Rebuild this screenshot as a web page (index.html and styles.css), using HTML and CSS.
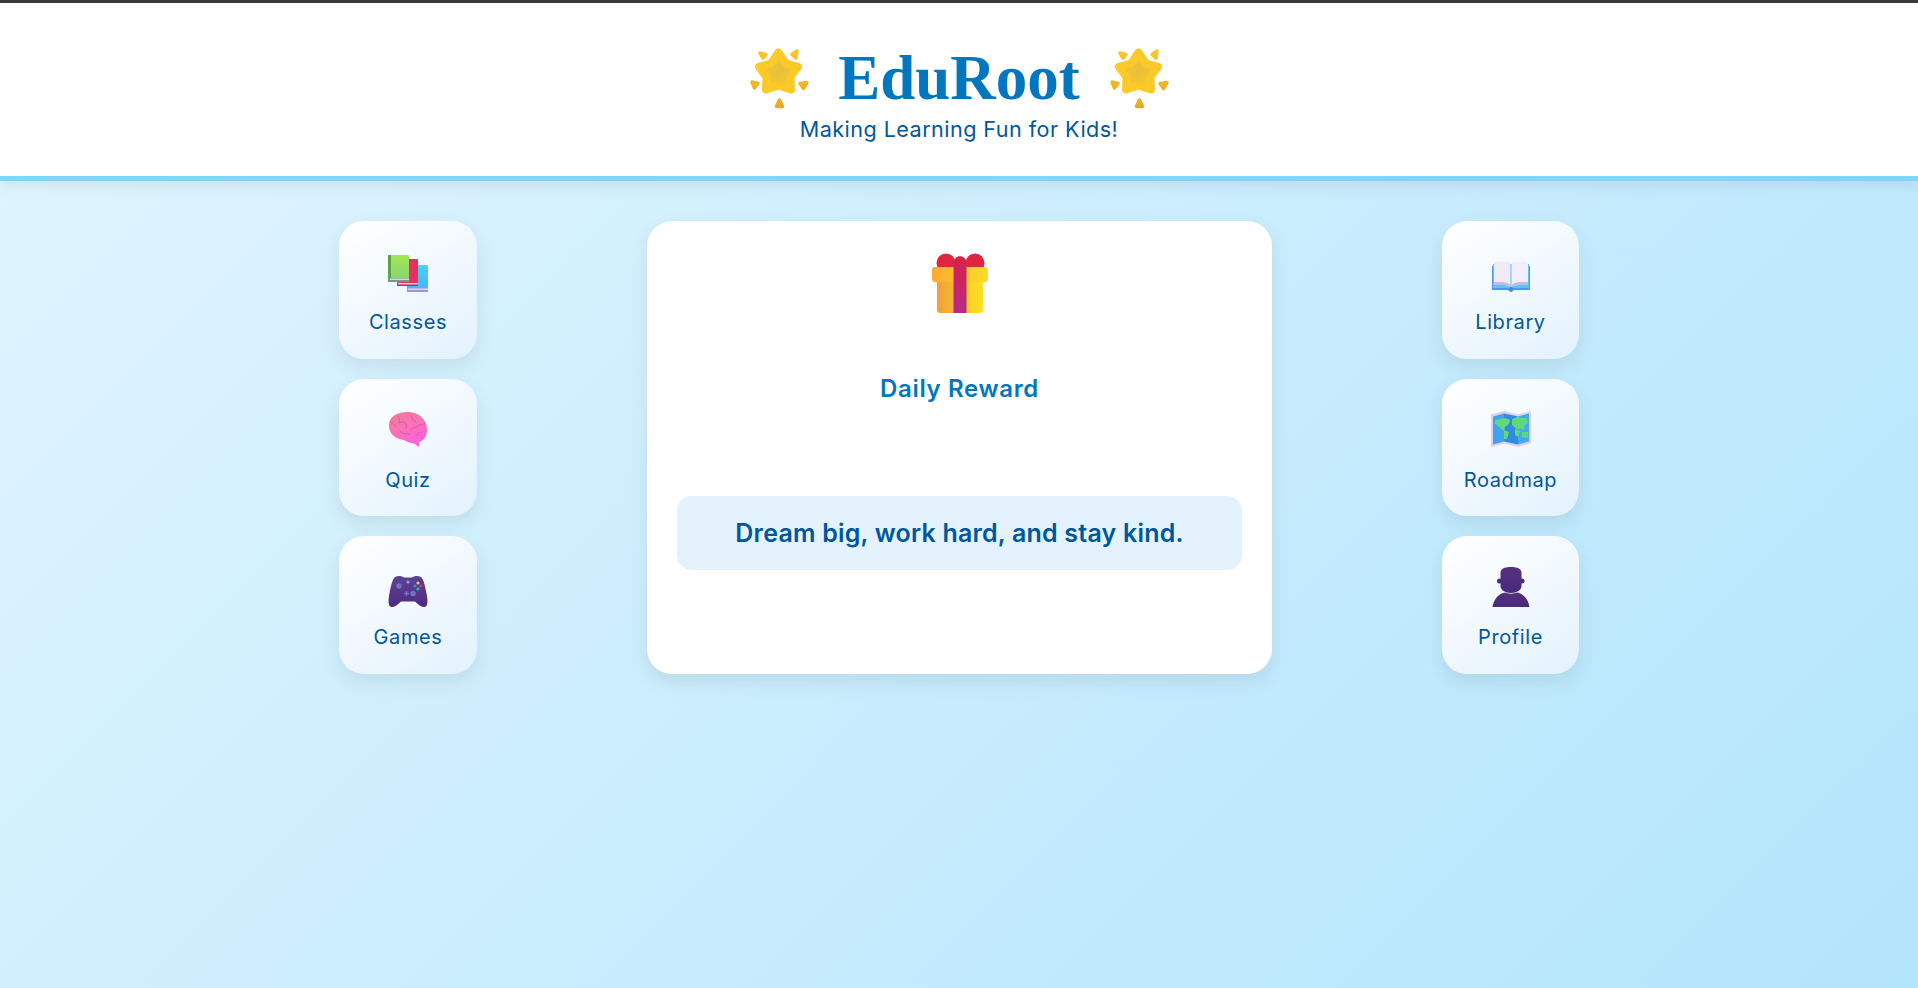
FILE: index.html
```html
<!DOCTYPE html>
<html>
<head>
    <title>EduRoot</title>
    <link rel="stylesheet" href="styles.css">
</head>
<body>
    <svg class="svg-defs" width="0" height="0">
        <defs>
            <radialGradient id="star-fill" cx="0.5" cy="0.5" r="0.6">
                <stop offset="0" stop-color="#e6bf3e"/>
                <stop offset="1" stop-color="#fdcb22"/>
            </radialGradient>
            <linearGradient id="spark-fill" x1="0" y1="0" x2="0" y2="1">
                <stop offset="0" stop-color="#f6c827"/>
                <stop offset="1" stop-color="#e8a92a"/>
            </linearGradient>
            <linearGradient id="brain-fill" x1="0" y1="0" x2="0.6" y2="1">
                <stop offset="0" stop-color="#ee7f92"/>
                <stop offset="0.5" stop-color="#f972b8"/>
                <stop offset="1" stop-color="#ff5fe0"/>
            </linearGradient>
            <linearGradient id="pad-fill" x1="0" y1="0" x2="0" y2="1">
                <stop offset="0" stop-color="#5b4396"/>
                <stop offset="1" stop-color="#4f2a80"/>
            </linearGradient>
            <linearGradient id="person-fill" x1="0" y1="0" x2="0" y2="1">
                <stop offset="0" stop-color="#54317f"/>
                <stop offset="1" stop-color="#49297a"/>
            </linearGradient>
            <linearGradient id="box-fill" x1="0" y1="0" x2="1" y2="0">
                <stop offset="0" stop-color="#f0a03c"/>
                <stop offset="1" stop-color="#ffe31f"/>
            </linearGradient>
            <linearGradient id="lid-fill" x1="0" y1="0" x2="1" y2="0">
                <stop offset="0" stop-color="#f9ab2f"/>
                <stop offset="1" stop-color="#ffdc2a"/>
            </linearGradient>
            <linearGradient id="ribbon-fill" x1="0" y1="0" x2="0" y2="1">
                <stop offset="0" stop-color="#dc2045"/>
                <stop offset="1" stop-color="#b62a8c"/>
            </linearGradient>
            <linearGradient id="green-book" x1="0" y1="0" x2="0" y2="1">
                <stop offset="0" stop-color="#a3e552"/>
                <stop offset="1" stop-color="#86d476"/>
            </linearGradient>
            <linearGradient id="blue-book" x1="0" y1="0" x2="0" y2="1">
                <stop offset="0" stop-color="#4dd0f5"/>
                <stop offset="1" stop-color="#45b3f5"/>
            </linearGradient>
        </defs>
    </svg>

    <header class="site-header">
        <div class="brand">
            <svg class="star" viewBox="6 6 64 64" width="64" height="64">
                <polygon points="37.5,12.5 45,23.5 57,26.8 49.5,36.9 50,49.5 37.5,45.5 25,49.5 25.500,36.9 18,26.8 30,23.5" fill="url(#star-fill)" stroke="#fbc928" stroke-width="8" stroke-linejoin="round"/>
                <path d="M19 13L25 14.500L22 18ZM51 14.500L56 11L55 18ZM11 42L17 43.500L13.500 48ZM59 43.500L66 42.500L62.500 48.500ZM38.500 60L41.500 66.500L35.500 66.500Z" fill="url(#spark-fill)" stroke="url(#spark-fill)" stroke-width="3.500" stroke-linejoin="round"/>
            </svg>
            <h1>EduRoot</h1>
            <svg class="star" viewBox="6 6 64 64" width="64" height="64">
                <polygon points="37.5,12.5 45,23.5 57,26.8 49.5,36.9 50,49.5 37.5,45.5 25,49.5 25.500,36.9 18,26.8 30,23.5" fill="url(#star-fill)" stroke="#fbc928" stroke-width="8" stroke-linejoin="round"/>
                <path d="M19 13L25 14.500L22 18ZM51 14.500L56 11L55 18ZM11 42L17 43.500L13.500 48ZM59 43.500L66 42.500L62.500 48.500ZM38.500 60L41.500 66.500L35.500 66.500Z" fill="url(#spark-fill)" stroke="url(#spark-fill)" stroke-width="3.500" stroke-linejoin="round"/>
            </svg>
        </div>
        <p class="tagline">Making Learning Fun for Kids!</p>
    </header>

    <main class="dashboard">
        <nav class="tile-column">
            <a class="tile" href="#">
                <svg class="tile-icon" viewBox="0 0 40 40">
                    <rect x="19" y="13" width="21" height="27" rx="1" fill="url(#blue-book)"/>
                    <rect x="19" y="36" width="21" height="4" fill="#8f9ad8"/>
                    <rect x="20" y="36.5" width="20" height="1.5" fill="#d9d6ee"/>
                    <rect x="9" y="7" width="21" height="27" rx="1" fill="#e8305f"/>
                    <rect x="9" y="31" width="21" height="3" fill="#b52a6a"/>
                    <rect x="10" y="31" width="20" height="1.5" fill="#e6cfe0"/>
                    <rect x="0" y="3" width="21" height="27" rx="1" fill="url(#green-book)"/>
                    <rect x="0" y="3" width="3" height="27" fill="#5fa048"/>
                    <rect x="0" y="26" width="21" height="4" fill="#6f9a8c"/>
                    <rect x="2" y="26.5" width="19" height="1.5" fill="#d5d9da"/>
                </svg>
                <span>Classes</span>
            </a>
            <a class="tile" href="#">
                <svg class="tile-icon" viewBox="0 0 40 40">
                    <path d="M1 15C1 7 9 2 19 2C31 2 39 9 39 20C39 27 35 31 31 32L31 37L26 33.500C22 33 19 32 16 30C12 29.500 8 28 6 26C3 24 1 20 1 15Z" fill="url(#brain-fill)"/>
                    <path d="M9 6C13 8 11 13 11 13C16 10 20 13 18 18M23 5C23 10 28 12 28 12M37 14C31 14 29 17 29 17C25 17 22 20 22 20M3 12C6 14 8 17 8 17M12 21C15 25 22 24 22 24M28 25C31 25 34 22 34 22" fill="none" stroke="#d9588c" stroke-width="0.9" stroke-linecap="round"/>
                </svg>
                <span>Quiz</span>
            </a>
            <a class="tile" href="#">
                <svg class="tile-icon" viewBox="0 0 40 40">
                    <path d="M7 10C10 8.500 14 9 16 10.500L24 10.500C26 9 30 8.500 33 10C35.500 12 37 18 39 29C40 35 39.500 39.500 36.500 40C33 40.500 30 37 27 34.500L13 34.500C10 37 7 40.500 3.500 40C0.500 39.500 0 35 1 29C3 18 4.500 12 7 10Z" fill="url(#pad-fill)"/>
                    <circle cx="11" cy="19" r="2.8" fill="#7670c4"/>
                    <circle cx="25" cy="26.5" r="2.8" fill="#7670c4"/>
                    <path d="M16 26.500H21M18.500 24V29" stroke="#7670c4" stroke-width="1.500"/>
                    <circle cx="20" cy="15" r="1.6" fill="#a39cb8"/>
                    <circle cx="30" cy="16" r="1.6" fill="#f5c63a"/>
                    <circle cx="27" cy="19" r="1.6" fill="#2f8fe0"/>
                    <circle cx="33" cy="19" r="1.6" fill="#ee2f5b"/>
                    <circle cx="30" cy="22" r="1.6" fill="#1fc48a"/>
                </svg>
                <span>Games</span>
            </a>
        </nav>

        <section class="reward-card">
            <svg class="gift" viewBox="0 0 64 64" width="64" height="64">
                <circle cx="18" cy="12" r="9.5" fill="#e0263f"/>
                <circle cx="47" cy="12" r="9.5" fill="#e0263f"/>
                <rect x="9" y="28" width="46" height="34" rx="3" fill="url(#box-fill)"/>
                <rect x="4" y="16" width="56" height="15" rx="3" fill="url(#lid-fill)"/>
                <path d="M25.500 12C25.500 3 38.500 3 38.500 12V62H25.500Z" fill="url(#ribbon-fill)"/>
            </svg>
            <h2>Daily Reward</h2>
            <p class="quote">Dream big, work hard, and stay kind.</p>
        </section>

        <nav class="tile-column">
            <a class="tile" href="#">
                <svg class="tile-icon" viewBox="0 0 40 40">
                    <path d="M1 14H39V38H23L20 40.500L17 38H1Z" fill="#4a9bef"/>
                    <path d="M2 12H38V36H2Z" fill="#5cc4f5"/>
                    <path d="M3 13C3 10.500 5 9.500 7 9.500H16C18 9.500 19.500 11 19.500 13V35C17 33 14 33 11 33H5C3.500 33 3 32 3 31Z" fill="#eeeaf7"/>
                    <path d="M37 13C37 10.500 35 9.500 33 9.500H24C22 9.500 20.500 11 20.500 13V35C23 33 26 33 29 33H35C36.500 33 37 32 37 31Z" fill="#f1eef9"/>
                    <path d="M3 30H11C14 30 17 31 19.500 33V35C17 33 14 33 11 33H3ZM37 30H29C26 30 23 31 20.500 33V35C23 33 26 33 29 33H37Z" fill="#c5bcdd"/>
                    <circle cx="20" cy="37" r="2" fill="#3d8ae0"/>
                </svg>
                <span>Library</span>
            </a>
            <a class="tile" href="#">
                <svg class="tile-icon" viewBox="0 0 40 40">
                    <path d="M0 4.500L13 1L27 4.500L40 1V33L27 37L13 33.500L0 37Z" fill="#dcd1e6"/>
                    <path d="M2 6.500L13 3.500V31.500L2 34.500Z" fill="#41a2f2"/>
                    <path d="M13 3.500L27 6.500V34.500L13 31.500Z" fill="#2f8ce0"/>
                    <path d="M27 6.500L38 3.500V31.500L27 34.500Z" fill="#46a8f4"/>
                    <path d="M4 10L14 8L19 10L18 14L14 17L13 21L8 17L4 14ZM13 20L18 22L16 29L13 29ZM21 9L26 7L31 8L36 8L37 13L33 16L33 20L29 18L27 20L24 18L21 15ZM24 19L29 21L27 27L24 25ZM31 22L37 22L37 28L31 27Z" fill="#62d977"/>
                </svg>
                <span>Roadmap</span>
            </a>
            <a class="tile" href="#">
                <svg class="tile-icon" viewBox="0 0 40 40">
                    <path d="M1.500 40C3 31 9 26 14 25.500C17 27 23 27 26 25.500C31 26 37 31 38.500 40Z" fill="url(#person-fill)"/>
                    <circle cx="8.5" cy="14" r="2.5" fill="#4a2b74"/>
                    <circle cx="31" cy="14" r="2.5" fill="#4a2b74"/>
                    <path d="M9.500 6C9.500 2 13 0 20 0C27 0 30.500 2 30.500 6V19C30.500 23 26 26 20 26C14 26 9.500 23 9.500 19Z" fill="url(#person-fill)"/>
                </svg>
                <span>Profile</span>
            </a>
        </nav>
    </main>
</body>
</html>
```

FILE: styles.css
```css
* {
    box-sizing: border-box;
}

html, body {
    height: 100%;
}

body {
    margin: 0;
    font-family: Inter, "Noto Sans", sans-serif;
    background: linear-gradient(135deg, #e1f5fe, #b3e5fc);
    color: #01579b;
}

.svg-defs {
    position: absolute;
}

.site-header {
    background-color: #fff;
    border-top: 3px solid #3a3a3a;
    border-bottom: 5px solid #81d4fa;
    box-shadow: 0 4px 15px rgba(0, 0, 0, 0.08);
    height: 181px;
    padding-top: 43px;
    text-align: center;
}

.brand {
    display: flex;
    justify-content: center;
    align-items: center;
    gap: 27px;
    height: 64px;
}

.brand h1 {
    margin: 0;
    font-family: "Liberation Serif", serif;
    font-size: 63px;
    font-weight: bold;
    line-height: 64px;
    color: #0277bd;
}

.tagline {
    margin: 7px 0 0;
    font-size: 21.6px;
    letter-spacing: 0.45px;
    line-height: 25px;
}

.dashboard {
    display: grid;
    grid-template-columns: 138px 625px 137px;
    justify-content: space-between;
    align-items: start;
    width: 1240px;
    margin: 40px auto 0;
}

.tile-column {
    display: flex;
    flex-direction: column;
    gap: 20px;
}

.tile {
    display: flex;
    flex-direction: column;
    align-items: center;
    height: 137.5px;
    padding-top: 31px;
    background: linear-gradient(145deg, #fff, #e3f2fd);
    border-radius: 25px;
    box-shadow: 0 8px 20px rgba(0, 0, 0, 0.08);
    color: #01579b;
    font-size: 20px;
    letter-spacing: 0.6px;
    text-decoration: none;
}

.tile-icon {
    display: block;
    width: 40px;
    height: 40px;
    margin-bottom: 18px;
}

.reward-card {
    display: flex;
    flex-direction: column;
    align-items: center;
    height: 452.5px;
    padding: 30px;
    background-color: #fff;
    border-radius: 25px;
    box-shadow: 0 8px 20px rgba(0, 0, 0, 0.08);
}

.gift {
    display: block;
}

.reward-card h2 {
    margin: 57px 0 0;
    font-size: 24px;
    font-weight: 600;
    letter-spacing: 0.65px;
    line-height: 34px;
    color: #0277bd;
}

.quote {
    width: 100%;
    margin: 90px 0 0;
    padding: 20px;
    background-color: #e3f2fd;
    border-radius: 15px;
    font-size: 25px;
    font-weight: 600;
    letter-spacing: 0.2px;
    line-height: 34px;
    text-align: center;
}
```
